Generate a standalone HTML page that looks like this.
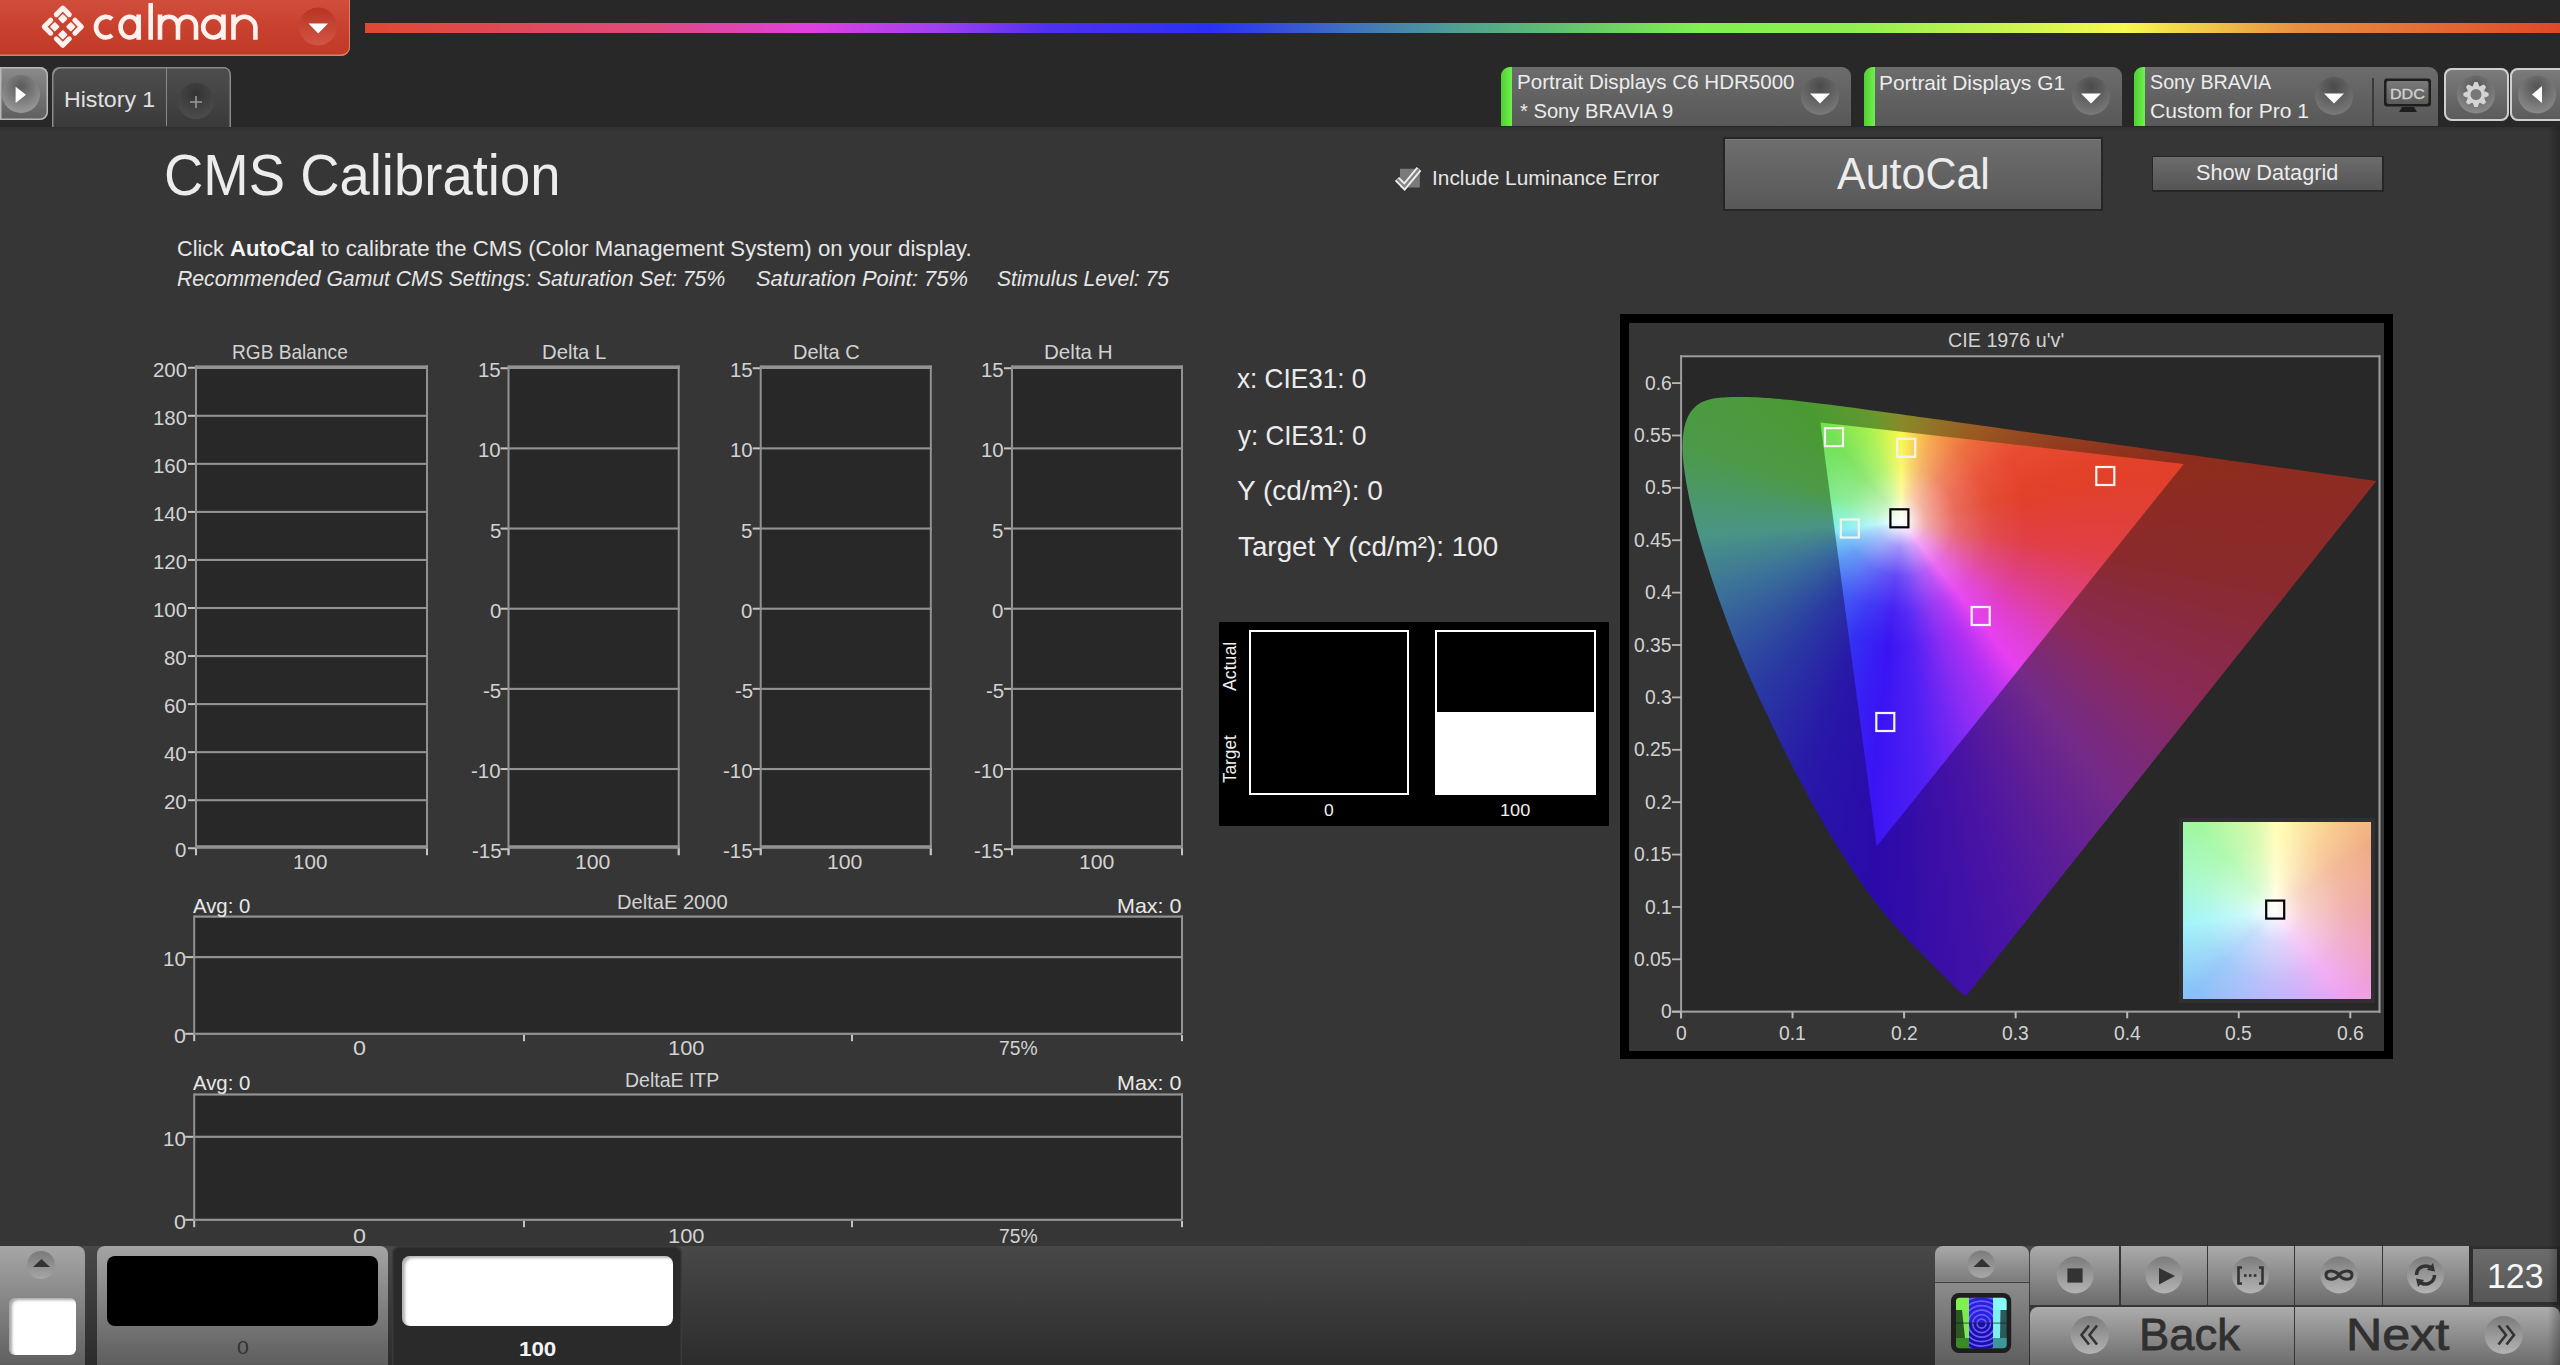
<!DOCTYPE html><html><head><meta charset="utf-8"><style>
html,body{margin:0;padding:0;}
body{width:2560px;height:1365px;overflow:hidden;position:relative;background:#363636;font-family:"Liberation Sans",sans-serif;}
.t{position:absolute;white-space:nowrap;transform-origin:0 0;}
svg{position:absolute;}
</style></head><body>

<div style="position:absolute;left:0px;top:0px;width:2560px;height:127px;background:#282828;"></div>
<div style="position:absolute;left:-10px;top:-10px;width:360px;height:66px;background:linear-gradient(#d45240,#c8402e 60%,#c03a28);border-radius:0 0 9px 9px;box-shadow:inset 0 -1.5px 0 #d8806e, inset -1px 0 0 #d8806e;"></div>
<svg style="left:0;top:0" width="350" height="56" viewBox="0 0 350 56">
<path d="M56.29,14.61L62.80,8.10L69.31,14.61M50.71,20.19L44.20,26.70L50.71,33.21M74.89,20.19L81.40,26.70L74.89,33.21M56.29,38.79L62.80,45.30L69.31,38.79" fill="none" stroke="#fff2ee" stroke-width="5.0" stroke-linecap="round" stroke-linejoin="round"/>
<path d="M62.80,15.20L66.30,18.70L62.80,22.20L59.30,18.70ZM54.80,23.20L58.30,26.70L54.80,30.20L51.30,26.70ZM70.80,23.20L74.30,26.70L70.80,30.20L67.30,26.70ZM62.80,31.20L66.30,34.70L62.80,38.20L59.30,34.70Z" fill="#fff2ee" stroke="#fff2ee" stroke-width="2" stroke-linejoin="round"/>
<path d="M112.16,18.99A10.0,10.35 0 1 0 112.16,35.31M138.70,27.15A9.05,10.35 0 1 0 120.60,27.15A9.05,10.35 0 1 0 138.70,27.15M138.70,14.5L138.70,39.8M150.7,3.1L150.7,39.8M160.00,14.5L160.00,39.8M160.00,25.80A9.00,9.00 0 0 1 178.00,25.80L178.00,39.8M178.00,25.80A9.00,9.00 0 0 1 196.00,25.80L196.00,39.8M223.50,27.15A10.15,10.35 0 1 0 203.20,27.15A10.15,10.35 0 1 0 223.50,27.15M223.50,14.5L223.50,39.8M233.50,14.5L233.50,39.8M233.50,27.75A10.95,10.95 0 0 1 255.40,27.75L255.40,39.8" fill="none" stroke="#fff2ee" stroke-width="4.6"/>
<defs><linearGradient id="rb" x1="0" y1="0" x2="0" y2="1"><stop offset="0" stop-color="#b83424"/><stop offset="1" stop-color="#d25544"/></linearGradient></defs>
<circle cx="318" cy="26.5" r="19" fill="url(#rb)"/>
<path d="M308.5,23.5L328,23.5L318.2,33.5Z" fill="#ffffff"/>
</svg>
<div style="position:absolute;left:365px;top:23px;width:2195px;height:10px;background:linear-gradient(90deg,#e04830 0%,#e04a80 13.4%,#e040e0 20.3%,#a040f0 26.2%,#5030f0 31.1%,#2a30f4 38.5%,#4070c0 44.8%,#50a090 49.9%,#60c070 54.4%,#80f050 60.8%,#90f050 67.7%,#f8f850 80.2%,#e89040 88%,#e04828 100%);"></div>
<div style="position:absolute;left:0px;top:67px;width:48px;height:53px;background:linear-gradient(#8c8c8c,#5e5e5e);border-radius:0 8px 8px 0;box-shadow:inset 0 0 0 1.5px #b8b8b8;"></div>
<svg style="left:0;top:67" width="48" height="53"><defs><radialGradient id="pc" cx="0.5" cy="0.3" r="0.7"><stop offset="0" stop-color="#5a5a5a"/><stop offset="1" stop-color="#9a9a9a"/></radialGradient></defs>
<circle cx="21" cy="27" r="19" fill="url(#pc)"/><path d="M15.6,19.7L26,27.8L15.6,36Z" fill="#fff"/></svg>
<div style="position:absolute;left:52px;top:67px;width:179px;height:60px;background:linear-gradient(#4e4e4e,#3a3a3a);border-radius:8px 8px 0 0;box-shadow:inset 1.5px 1.5px 0 #8a8a8a, inset -1.5px 0 0 #8a8a8a;"></div>
<div style="position:absolute;left:165.5px;top:68px;width:1.5px;height:58px;background:#8a8a8a;"></div>
<svg style="left:166;top:67" width="65" height="59"><defs><radialGradient id="hc" cx="0.5" cy="0.3" r="0.7"><stop offset="0" stop-color="#333"/><stop offset="1" stop-color="#4c4c4c"/></radialGradient></defs>
<circle cx="30" cy="34" r="18" fill="url(#hc)"/><path d="M30,29V41M24,35H36" stroke="#9a9a9a" stroke-width="1.6"/></svg>
<div class="t" style="left:63.75px;top:87.81px;font-size:22.67px;line-height:22.67px;color:#e0e0e0;transform:scaleX(1.0206);">History 1</div>
<div style="position:absolute;left:1501px;top:67px;width:350px;height:59px;background:linear-gradient(#6c6c6c,#585858);border-radius:9px 9px 0 0;overflow:hidden;"></div>
<div style="position:absolute;left:1501px;top:67px;width:11px;height:59px;background:linear-gradient(90deg,#50d030,#70f050);border-radius:9px 0 0 0;"></div>
<div style="position:absolute;left:1864px;top:67px;width:258px;height:59px;background:linear-gradient(#6c6c6c,#585858);border-radius:9px 9px 0 0;overflow:hidden;"></div>
<div style="position:absolute;left:1864px;top:67px;width:11px;height:59px;background:linear-gradient(90deg,#50d030,#70f050);border-radius:9px 0 0 0;"></div>
<div style="position:absolute;left:2134px;top:67px;width:304px;height:59px;background:linear-gradient(#6c6c6c,#585858);border-radius:9px 9px 0 0;overflow:hidden;"></div>
<div style="position:absolute;left:2134px;top:67px;width:11px;height:59px;background:linear-gradient(90deg,#50d030,#70f050);border-radius:9px 0 0 0;"></div>
<svg style="left:1800;top:76" width="40" height="40"><defs><radialGradient id="dc1820" cx="0.5" cy="0.25" r="0.75"><stop offset="0" stop-color="#4a4a4a"/><stop offset="1" stop-color="#7a7a7a"/></radialGradient></defs>
<circle cx="20" cy="20" r="19" fill="url(#dc1820)"/><path d="M10,17.5L30,17.5L20,27.5Z" fill="#fff"/></svg>
<svg style="left:2071;top:76" width="40" height="40"><defs><radialGradient id="dc2091" cx="0.5" cy="0.25" r="0.75"><stop offset="0" stop-color="#4a4a4a"/><stop offset="1" stop-color="#7a7a7a"/></radialGradient></defs>
<circle cx="20" cy="20" r="19" fill="url(#dc2091)"/><path d="M10,17.5L30,17.5L20,27.5Z" fill="#fff"/></svg>
<svg style="left:2314;top:76" width="40" height="40"><defs><radialGradient id="dc2334" cx="0.5" cy="0.25" r="0.75"><stop offset="0" stop-color="#4a4a4a"/><stop offset="1" stop-color="#7a7a7a"/></radialGradient></defs>
<circle cx="20" cy="20" r="19" fill="url(#dc2334)"/><path d="M10,17.5L30,17.5L20,27.5Z" fill="#fff"/></svg>
<div style="position:absolute;left:2372px;top:78px;width:1.5px;height:48px;background:#3a3a3a;"></div>
<div class="t" style="left:1517.36px;top:71.98px;font-size:20.93px;line-height:20.93px;color:#ececec;transform:scaleX(0.9823);">Portrait Displays C6 HDR5000</div>
<div class="t" style="left:1519.70px;top:100.78px;font-size:20.93px;line-height:20.93px;color:#ececec;transform:scaleX(0.9638);">* Sony BRAVIA 9</div>
<div class="t" style="left:1879.03px;top:72.58px;font-size:20.93px;line-height:20.93px;color:#ececec;">Portrait Displays G1</div>
<div class="t" style="left:2150.11px;top:72.28px;font-size:20.93px;line-height:20.93px;color:#ececec;transform:scaleX(0.9423);">Sony BRAVIA</div>
<div class="t" style="left:2149.95px;top:100.78px;font-size:20.93px;line-height:20.93px;color:#ececec;transform:scaleX(1.0055);">Custom for Pro 1</div>
<svg style="left:2380;top:76" width="56" height="40">
<rect x="4" y="2.5" width="47" height="28" rx="3" fill="#1e1e1e"/>
<rect x="6.5" y="5" width="42" height="23" rx="2" fill="url(#ddg)"/>
<defs><linearGradient id="ddg" x1="0" y1="0" x2="0" y2="1"><stop offset="0" stop-color="#7a7a7a"/><stop offset="1" stop-color="#5a5a5a"/></linearGradient></defs>
<path d="M22,31L34,31L37,36L19,36Z" fill="#1e1e1e"/>
</svg>
<div class="t" style="left:2389.71px;top:86.08px;font-size:15.26px;line-height:15.26px;color:#d0d0d0;transform:scaleX(1.0548);-webkit-text-stroke:0.4px #d0d0d0;">DDC</div>
<div style="position:absolute;left:2444px;top:68px;width:65px;height:53px;background:linear-gradient(#7c7c7c,#5a5a5a);border-radius:8px;box-shadow:inset 0 0 0 2px #cfcfcf;"></div>
<div style="position:absolute;left:2510px;top:68px;width:60px;height:53px;background:linear-gradient(#7c7c7c,#5a5a5a);border-radius:8px;box-shadow:inset 0 0 0 2px #cfcfcf;"></div>
<svg style="left:2444;top:68" width="65" height="53"><defs><radialGradient id="gc" cx="0.5" cy="0.3" r="0.7"><stop offset="0" stop-color="#545454"/><stop offset="1" stop-color="#8a8a8a"/></radialGradient></defs>
<circle cx="32" cy="26.5" r="19" fill="url(#gc)"/>
<g transform="translate(32,26.5)"><path d="M-3.2,-8.5L-1.6,-12.6L1.6,-12.6L3.2,-8.5Z" fill="#d4d4d4" transform="rotate(0)"/><path d="M-3.2,-8.5L-1.6,-12.6L1.6,-12.6L3.2,-8.5Z" fill="#d4d4d4" transform="rotate(45)"/><path d="M-3.2,-8.5L-1.6,-12.6L1.6,-12.6L3.2,-8.5Z" fill="#d4d4d4" transform="rotate(90)"/><path d="M-3.2,-8.5L-1.6,-12.6L1.6,-12.6L3.2,-8.5Z" fill="#d4d4d4" transform="rotate(135)"/><path d="M-3.2,-8.5L-1.6,-12.6L1.6,-12.6L3.2,-8.5Z" fill="#d4d4d4" transform="rotate(180)"/><path d="M-3.2,-8.5L-1.6,-12.6L1.6,-12.6L3.2,-8.5Z" fill="#d4d4d4" transform="rotate(225)"/><path d="M-3.2,-8.5L-1.6,-12.6L1.6,-12.6L3.2,-8.5Z" fill="#d4d4d4" transform="rotate(270)"/><path d="M-3.2,-8.5L-1.6,-12.6L1.6,-12.6L3.2,-8.5Z" fill="#d4d4d4" transform="rotate(315)"/><circle r="7.3" fill="#787878" stroke="#d4d4d4" stroke-width="3.6"/></g></svg>
<svg style="left:2510;top:68" width="50" height="53"><defs><radialGradient id="bc" cx="0.5" cy="0.3" r="0.7"><stop offset="0" stop-color="#545454"/><stop offset="1" stop-color="#8a8a8a"/></radialGradient></defs>
<circle cx="27" cy="26.5" r="19" fill="url(#bc)"/><path d="M32,18L22,26.5L32,35Z" fill="#fff"/></svg>
<div class="t" style="left:163.98px;top:146.18px;font-size:58.14px;line-height:58.14px;color:#ececec;transform:scaleX(0.9369);">CMS Calibration</div>
<div class="t" style="left:176.92px;top:237.93px;font-size:22.53px;line-height:22.53px;color:#e6e6e6;transform:scaleX(0.9612);">Click</div>
<div class="t" style="left:230.35px;top:237.93px;font-size:22.53px;line-height:22.53px;color:#f4f4f4;font-weight:bold;transform:scaleX(0.9803);">AutoCal</div>
<div class="t" style="left:321.07px;top:237.93px;font-size:22.53px;line-height:22.53px;color:#e6e6e6;transform:scaleX(0.9853);">to calibrate the CMS (Color Management System) on your display.</div>
<div class="t" style="left:177.36px;top:267.73px;font-size:22.53px;line-height:22.53px;color:#e6e6e6;font-style:italic;transform:scaleX(0.9400);">Recommended Gamut CMS Settings: Saturation Set: 75%</div>
<div class="t" style="left:755.84px;top:267.73px;font-size:22.53px;line-height:22.53px;color:#e6e6e6;font-style:italic;transform:scaleX(0.9733);">Saturation Point: 75%</div>
<div class="t" style="left:997.37px;top:267.73px;font-size:22.53px;line-height:22.53px;color:#e6e6e6;font-style:italic;transform:scaleX(0.9346);">Stimulus Level: 75</div>
<svg style="left:1390;top:160" width="40" height="36">
<rect x="10" y="8.75" width="19.8" height="18.75" fill="#7a7a7a"/>
<path d="M7,19L14.5,26.5L29,9" fill="none" stroke="#f0f0f0" stroke-width="6" stroke-linejoin="miter"/>
<path d="M7,19L14.5,26.5L29,9" fill="none" stroke="#858585" stroke-width="2.4" stroke-linejoin="miter"/>
</svg>
<div class="t" style="left:1432.12px;top:168.47px;font-size:20.35px;line-height:20.35px;color:#e6e6e6;transform:scaleX(1.0252);">Include Luminance Error</div>
<div style="position:absolute;left:1723px;top:137px;width:380px;height:74px;background:#262626;"></div>
<div style="position:absolute;left:1725px;top:139px;width:376px;height:70px;background:linear-gradient(#6e6e6e,#585858);box-shadow:inset 0 1px 0 #7a7a7a;"></div>
<div class="t" style="left:1837.00px;top:153.09px;font-size:43.60px;line-height:43.60px;color:#ececec;transform:scaleX(0.9857);">AutoCal</div>
<div style="position:absolute;left:2151.5px;top:155.5px;width:232px;height:36px;background:#262626;"></div>
<div style="position:absolute;left:2152.7px;top:156.7px;width:229.5px;height:33.5px;background:linear-gradient(#6c6c6c,#555);"></div>
<div class="t" style="left:2195.92px;top:161.93px;font-size:22.53px;line-height:22.53px;color:#ececec;transform:scaleX(0.9641);">Show Datagrid</div>
<svg style="left:0;top:0" width="1240" height="1246"><rect x="196.00" y="367.20" width="231.00" height="479.80" fill="#282828"/><rect x="196.00" y="365.40" width="232.00" height="3.60" fill="#929292"/><rect x="188.00" y="366.75" width="8.00" height="2.00" fill="#c4c4c4"/><rect x="196.00" y="414.75" width="232.00" height="2.10" fill="#929292"/><rect x="188.00" y="414.80" width="8.00" height="2.00" fill="#c4c4c4"/><rect x="196.00" y="462.80" width="232.00" height="2.10" fill="#929292"/><rect x="188.00" y="462.85" width="8.00" height="2.00" fill="#c4c4c4"/><rect x="196.00" y="510.85" width="232.00" height="2.10" fill="#929292"/><rect x="188.00" y="510.90" width="8.00" height="2.00" fill="#c4c4c4"/><rect x="196.00" y="558.90" width="232.00" height="2.10" fill="#929292"/><rect x="188.00" y="558.95" width="8.00" height="2.00" fill="#c4c4c4"/><rect x="196.00" y="606.95" width="232.00" height="2.10" fill="#929292"/><rect x="188.00" y="607.00" width="8.00" height="2.00" fill="#c4c4c4"/><rect x="196.00" y="655.00" width="232.00" height="2.10" fill="#929292"/><rect x="188.00" y="655.05" width="8.00" height="2.00" fill="#c4c4c4"/><rect x="196.00" y="703.05" width="232.00" height="2.10" fill="#929292"/><rect x="188.00" y="703.10" width="8.00" height="2.00" fill="#c4c4c4"/><rect x="196.00" y="751.10" width="232.00" height="2.10" fill="#929292"/><rect x="188.00" y="751.15" width="8.00" height="2.00" fill="#c4c4c4"/><rect x="196.00" y="799.15" width="232.00" height="2.10" fill="#929292"/><rect x="188.00" y="799.20" width="8.00" height="2.00" fill="#c4c4c4"/><rect x="196.00" y="845.20" width="232.00" height="3.60" fill="#929292"/><rect x="188.00" y="847.25" width="8.00" height="2.00" fill="#c4c4c4"/><rect x="195.00" y="365.40" width="2.00" height="490.00" fill="#929292"/><rect x="426.00" y="365.40" width="2.00" height="490.00" fill="#929292"/><rect x="195.00" y="848.50" width="2.00" height="6.50" fill="#c4c4c4"/><rect x="426.00" y="848.50" width="2.00" height="6.50" fill="#c4c4c4"/><rect x="508.50" y="367.20" width="170.20" height="479.80" fill="#282828"/><rect x="508.50" y="365.40" width="171.20" height="3.60" fill="#929292"/><rect x="500.50" y="367.22" width="8.00" height="2.00" fill="#c4c4c4"/><rect x="508.50" y="447.33" width="171.20" height="2.10" fill="#929292"/><rect x="500.50" y="447.38" width="8.00" height="2.00" fill="#c4c4c4"/><rect x="508.50" y="527.49" width="171.20" height="2.10" fill="#929292"/><rect x="500.50" y="527.54" width="8.00" height="2.00" fill="#c4c4c4"/><rect x="508.50" y="607.65" width="171.20" height="2.10" fill="#929292"/><rect x="500.50" y="607.70" width="8.00" height="2.00" fill="#c4c4c4"/><rect x="508.50" y="687.81" width="171.20" height="2.10" fill="#929292"/><rect x="500.50" y="687.86" width="8.00" height="2.00" fill="#c4c4c4"/><rect x="508.50" y="767.97" width="171.20" height="2.10" fill="#929292"/><rect x="500.50" y="768.02" width="8.00" height="2.00" fill="#c4c4c4"/><rect x="508.50" y="845.20" width="171.20" height="3.60" fill="#929292"/><rect x="500.50" y="848.18" width="8.00" height="2.00" fill="#c4c4c4"/><rect x="507.50" y="365.40" width="2.00" height="490.00" fill="#929292"/><rect x="677.70" y="365.40" width="2.00" height="490.00" fill="#929292"/><rect x="507.50" y="848.50" width="2.00" height="6.50" fill="#c4c4c4"/><rect x="677.70" y="848.50" width="2.00" height="6.50" fill="#c4c4c4"/><rect x="760.70" y="367.20" width="170.10" height="479.80" fill="#282828"/><rect x="760.70" y="365.40" width="171.10" height="3.60" fill="#929292"/><rect x="752.70" y="367.22" width="8.00" height="2.00" fill="#c4c4c4"/><rect x="760.70" y="447.33" width="171.10" height="2.10" fill="#929292"/><rect x="752.70" y="447.38" width="8.00" height="2.00" fill="#c4c4c4"/><rect x="760.70" y="527.49" width="171.10" height="2.10" fill="#929292"/><rect x="752.70" y="527.54" width="8.00" height="2.00" fill="#c4c4c4"/><rect x="760.70" y="607.65" width="171.10" height="2.10" fill="#929292"/><rect x="752.70" y="607.70" width="8.00" height="2.00" fill="#c4c4c4"/><rect x="760.70" y="687.81" width="171.10" height="2.10" fill="#929292"/><rect x="752.70" y="687.86" width="8.00" height="2.00" fill="#c4c4c4"/><rect x="760.70" y="767.97" width="171.10" height="2.10" fill="#929292"/><rect x="752.70" y="768.02" width="8.00" height="2.00" fill="#c4c4c4"/><rect x="760.70" y="845.20" width="171.10" height="3.60" fill="#929292"/><rect x="752.70" y="848.18" width="8.00" height="2.00" fill="#c4c4c4"/><rect x="759.70" y="365.40" width="2.00" height="490.00" fill="#929292"/><rect x="929.80" y="365.40" width="2.00" height="490.00" fill="#929292"/><rect x="759.70" y="848.50" width="2.00" height="6.50" fill="#c4c4c4"/><rect x="929.80" y="848.50" width="2.00" height="6.50" fill="#c4c4c4"/><rect x="1012.00" y="367.20" width="170.00" height="479.80" fill="#282828"/><rect x="1012.00" y="365.40" width="171.00" height="3.60" fill="#929292"/><rect x="1004.00" y="367.22" width="8.00" height="2.00" fill="#c4c4c4"/><rect x="1012.00" y="447.33" width="171.00" height="2.10" fill="#929292"/><rect x="1004.00" y="447.38" width="8.00" height="2.00" fill="#c4c4c4"/><rect x="1012.00" y="527.49" width="171.00" height="2.10" fill="#929292"/><rect x="1004.00" y="527.54" width="8.00" height="2.00" fill="#c4c4c4"/><rect x="1012.00" y="607.65" width="171.00" height="2.10" fill="#929292"/><rect x="1004.00" y="607.70" width="8.00" height="2.00" fill="#c4c4c4"/><rect x="1012.00" y="687.81" width="171.00" height="2.10" fill="#929292"/><rect x="1004.00" y="687.86" width="8.00" height="2.00" fill="#c4c4c4"/><rect x="1012.00" y="767.97" width="171.00" height="2.10" fill="#929292"/><rect x="1004.00" y="768.02" width="8.00" height="2.00" fill="#c4c4c4"/><rect x="1012.00" y="845.20" width="171.00" height="3.60" fill="#929292"/><rect x="1004.00" y="848.18" width="8.00" height="2.00" fill="#c4c4c4"/><rect x="1011.00" y="365.40" width="2.00" height="490.00" fill="#929292"/><rect x="1181.00" y="365.40" width="2.00" height="490.00" fill="#929292"/><rect x="1011.00" y="848.50" width="2.00" height="6.50" fill="#c4c4c4"/><rect x="1181.00" y="848.50" width="2.00" height="6.50" fill="#c4c4c4"/><rect x="194.20" y="916.60" width="987.80" height="117.20" fill="#282828"/><rect x="194.20" y="956.00" width="987.80" height="2.20" fill="#929292"/><rect x="194.20" y="1032.70" width="987.80" height="2.20" fill="#929292"/><rect x="185.20" y="956.10" width="9.00" height="2.00" fill="#c4c4c4"/><rect x="185.20" y="1032.80" width="9.00" height="2.00" fill="#c4c4c4"/><rect x="194.20" y="915.50" width="988.80" height="2.20" fill="#929292"/><rect x="193.20" y="915.50" width="2.00" height="118.30" fill="#929292"/><rect x="1181.00" y="915.50" width="2.00" height="118.30" fill="#929292"/><rect x="193.20" y="1034.90" width="2.00" height="6.30" fill="#c4c4c4"/><rect x="523.00" y="1034.90" width="2.00" height="6.30" fill="#c4c4c4"/><rect x="851.00" y="1034.90" width="2.00" height="6.30" fill="#c4c4c4"/><rect x="1181.00" y="1034.90" width="2.00" height="6.30" fill="#c4c4c4"/><rect x="194.20" y="1094.50" width="987.80" height="125.30" fill="#282828"/><rect x="194.20" y="1135.70" width="987.80" height="2.20" fill="#929292"/><rect x="194.20" y="1218.70" width="987.80" height="2.20" fill="#929292"/><rect x="185.20" y="1135.80" width="9.00" height="2.00" fill="#c4c4c4"/><rect x="185.20" y="1218.80" width="9.00" height="2.00" fill="#c4c4c4"/><rect x="194.20" y="1093.40" width="988.80" height="2.20" fill="#929292"/><rect x="193.20" y="1093.40" width="2.00" height="126.40" fill="#929292"/><rect x="1181.00" y="1093.40" width="2.00" height="126.40" fill="#929292"/><rect x="193.20" y="1220.90" width="2.00" height="6.30" fill="#c4c4c4"/><rect x="523.00" y="1220.90" width="2.00" height="6.30" fill="#c4c4c4"/><rect x="851.00" y="1220.90" width="2.00" height="6.30" fill="#c4c4c4"/><rect x="1181.00" y="1220.90" width="2.00" height="6.30" fill="#c4c4c4"/></svg>
<div class="t" style="left:232.47px;top:341.81px;font-size:20.78px;line-height:20.78px;color:#d2d2d2;transform:scaleX(0.9201);">RGB Balance</div>
<div class="t" style="left:293.46px;top:851.16px;font-size:21.08px;line-height:21.08px;color:#d2d2d2;transform:scaleX(0.9764);">100</div>
<div class="t" style="left:152.68px;top:358.71px;font-size:21.08px;line-height:21.08px;color:#d2d2d2;transform:scaleX(0.9700);">200</div>
<div class="t" style="left:152.68px;top:406.76px;font-size:21.08px;line-height:21.08px;color:#d2d2d2;transform:scaleX(0.9700);">180</div>
<div class="t" style="left:152.68px;top:454.81px;font-size:21.08px;line-height:21.08px;color:#d2d2d2;transform:scaleX(0.9700);">160</div>
<div class="t" style="left:152.68px;top:502.86px;font-size:21.08px;line-height:21.08px;color:#d2d2d2;transform:scaleX(0.9700);">140</div>
<div class="t" style="left:152.68px;top:550.91px;font-size:21.08px;line-height:21.08px;color:#d2d2d2;transform:scaleX(0.9700);">120</div>
<div class="t" style="left:152.68px;top:598.96px;font-size:21.08px;line-height:21.08px;color:#d2d2d2;transform:scaleX(0.9700);">100</div>
<div class="t" style="left:164.02px;top:647.01px;font-size:21.08px;line-height:21.08px;color:#d2d2d2;transform:scaleX(0.9700);">80</div>
<div class="t" style="left:164.02px;top:695.06px;font-size:21.08px;line-height:21.08px;color:#d2d2d2;transform:scaleX(0.9700);">60</div>
<div class="t" style="left:164.02px;top:743.11px;font-size:21.08px;line-height:21.08px;color:#d2d2d2;transform:scaleX(0.9700);">40</div>
<div class="t" style="left:164.02px;top:791.16px;font-size:21.08px;line-height:21.08px;color:#d2d2d2;transform:scaleX(0.9700);">20</div>
<div class="t" style="left:175.37px;top:839.21px;font-size:21.08px;line-height:21.08px;color:#d2d2d2;transform:scaleX(0.9700);">0</div>
<div class="t" style="left:542.38px;top:341.81px;font-size:20.78px;line-height:20.78px;color:#d2d2d2;transform:scaleX(0.9764);">Delta L</div>
<div class="t" style="left:575.41px;top:851.16px;font-size:21.08px;line-height:21.08px;color:#d2d2d2;transform:scaleX(1.0069);">100</div>
<div class="t" style="left:478.43px;top:359.18px;font-size:21.08px;line-height:21.08px;color:#d2d2d2;transform:scaleX(0.9700);">15</div>
<div class="t" style="left:478.32px;top:439.34px;font-size:21.08px;line-height:21.08px;color:#d2d2d2;transform:scaleX(0.9700);">10</div>
<div class="t" style="left:489.77px;top:519.50px;font-size:21.08px;line-height:21.08px;color:#d2d2d2;transform:scaleX(0.9700);">5</div>
<div class="t" style="left:489.67px;top:599.66px;font-size:21.08px;line-height:21.08px;color:#d2d2d2;transform:scaleX(0.9700);">0</div>
<div class="t" style="left:482.92px;top:679.82px;font-size:21.08px;line-height:21.08px;color:#d2d2d2;transform:scaleX(0.9700);">-5</div>
<div class="t" style="left:471.47px;top:759.98px;font-size:21.08px;line-height:21.08px;color:#d2d2d2;transform:scaleX(0.9700);">-10</div>
<div class="t" style="left:471.58px;top:840.14px;font-size:21.08px;line-height:21.08px;color:#d2d2d2;transform:scaleX(0.9700);">-15</div>
<div class="t" style="left:793.00px;top:341.81px;font-size:20.78px;line-height:20.78px;color:#d2d2d2;transform:scaleX(0.9637);">Delta C</div>
<div class="t" style="left:827.41px;top:851.16px;font-size:21.08px;line-height:21.08px;color:#d2d2d2;transform:scaleX(1.0069);">100</div>
<div class="t" style="left:730.13px;top:359.18px;font-size:21.08px;line-height:21.08px;color:#d2d2d2;transform:scaleX(0.9700);">15</div>
<div class="t" style="left:730.02px;top:439.34px;font-size:21.08px;line-height:21.08px;color:#d2d2d2;transform:scaleX(0.9700);">10</div>
<div class="t" style="left:741.47px;top:519.50px;font-size:21.08px;line-height:21.08px;color:#d2d2d2;transform:scaleX(0.9700);">5</div>
<div class="t" style="left:741.37px;top:599.66px;font-size:21.08px;line-height:21.08px;color:#d2d2d2;transform:scaleX(0.9700);">0</div>
<div class="t" style="left:734.62px;top:679.82px;font-size:21.08px;line-height:21.08px;color:#d2d2d2;transform:scaleX(0.9700);">-5</div>
<div class="t" style="left:723.17px;top:759.98px;font-size:21.08px;line-height:21.08px;color:#d2d2d2;transform:scaleX(0.9700);">-10</div>
<div class="t" style="left:723.28px;top:840.14px;font-size:21.08px;line-height:21.08px;color:#d2d2d2;transform:scaleX(0.9700);">-15</div>
<div class="t" style="left:1043.85px;top:341.81px;font-size:20.78px;line-height:20.78px;color:#d2d2d2;transform:scaleX(0.9911);">Delta H</div>
<div class="t" style="left:1079.01px;top:851.16px;font-size:21.08px;line-height:21.08px;color:#d2d2d2;transform:scaleX(1.0069);">100</div>
<div class="t" style="left:981.13px;top:359.18px;font-size:21.08px;line-height:21.08px;color:#d2d2d2;transform:scaleX(0.9700);">15</div>
<div class="t" style="left:981.02px;top:439.34px;font-size:21.08px;line-height:21.08px;color:#d2d2d2;transform:scaleX(0.9700);">10</div>
<div class="t" style="left:992.47px;top:519.50px;font-size:21.08px;line-height:21.08px;color:#d2d2d2;transform:scaleX(0.9700);">5</div>
<div class="t" style="left:992.37px;top:599.66px;font-size:21.08px;line-height:21.08px;color:#d2d2d2;transform:scaleX(0.9700);">0</div>
<div class="t" style="left:985.62px;top:679.82px;font-size:21.08px;line-height:21.08px;color:#d2d2d2;transform:scaleX(0.9700);">-5</div>
<div class="t" style="left:974.17px;top:759.98px;font-size:21.08px;line-height:21.08px;color:#d2d2d2;transform:scaleX(0.9700);">-10</div>
<div class="t" style="left:974.28px;top:840.14px;font-size:21.08px;line-height:21.08px;color:#d2d2d2;transform:scaleX(0.9700);">-15</div>
<div class="t" style="left:193.00px;top:895.71px;font-size:20.78px;line-height:20.78px;color:#e8e8e8;transform:scaleX(0.9795);">Avg: 0</div>
<div class="t" style="left:1117.28px;top:895.71px;font-size:20.78px;line-height:20.78px;color:#e8e8e8;transform:scaleX(1.0339);">Max: 0</div>
<div class="t" style="left:617.39px;top:892.21px;font-size:20.78px;line-height:20.78px;color:#d2d2d2;transform:scaleX(0.9676);">DeltaE 2000</div>
<div class="t" style="left:162.76px;top:948.26px;font-size:21.08px;line-height:21.08px;color:#d2d2d2;transform:scaleX(0.9774);">10</div>
<div class="t" style="left:173.54px;top:1024.96px;font-size:21.08px;line-height:21.08px;color:#d2d2d2;transform:scaleX(1.0182);">0</div>
<div class="t" style="left:352.67px;top:1038.43px;font-size:20.64px;line-height:20.64px;color:#d2d2d2;transform:scaleX(1.1305);">0</div>
<div class="t" style="left:668.36px;top:1038.43px;font-size:20.64px;line-height:20.64px;color:#d2d2d2;transform:scaleX(1.0594);">100</div>
<div class="t" style="left:999.03px;top:1038.43px;font-size:20.64px;line-height:20.64px;color:#d2d2d2;transform:scaleX(0.9361);">75%</div>
<div class="t" style="left:193.00px;top:1073.41px;font-size:20.78px;line-height:20.78px;color:#e8e8e8;transform:scaleX(0.9795);">Avg: 0</div>
<div class="t" style="left:1117.28px;top:1073.41px;font-size:20.78px;line-height:20.78px;color:#e8e8e8;transform:scaleX(1.0339);">Max: 0</div>
<div class="t" style="left:625.44px;top:1069.91px;font-size:20.78px;line-height:20.78px;color:#d2d2d2;transform:scaleX(0.9387);">DeltaE ITP</div>
<div class="t" style="left:162.76px;top:1127.96px;font-size:21.08px;line-height:21.08px;color:#d2d2d2;transform:scaleX(0.9774);">10</div>
<div class="t" style="left:173.54px;top:1210.96px;font-size:21.08px;line-height:21.08px;color:#d2d2d2;transform:scaleX(1.0182);">0</div>
<div class="t" style="left:352.67px;top:1226.03px;font-size:20.64px;line-height:20.64px;color:#d2d2d2;transform:scaleX(1.1305);">0</div>
<div class="t" style="left:668.36px;top:1226.03px;font-size:20.64px;line-height:20.64px;color:#d2d2d2;transform:scaleX(1.0594);">100</div>
<div class="t" style="left:999.03px;top:1226.03px;font-size:20.64px;line-height:20.64px;color:#d2d2d2;transform:scaleX(0.9361);">75%</div>
<div class="t" style="left:1236.84px;top:366.31px;font-size:27.03px;line-height:27.03px;color:#ececec;transform:scaleX(0.9678);">x: CIE31: 0</div>
<div class="t" style="left:1237.77px;top:422.71px;font-size:27.03px;line-height:27.03px;color:#ececec;transform:scaleX(0.9607);">y: CIE31: 0</div>
<div class="t" style="left:1237.20px;top:478.01px;font-size:27.03px;line-height:27.03px;color:#ececec;transform:scaleX(1.0374);">Y (cd/m²): 0</div>
<div class="t" style="left:1238.14px;top:533.61px;font-size:27.03px;line-height:27.03px;color:#ececec;transform:scaleX(1.0293);">Target Y (cd/m²): 100</div>
<div style="position:absolute;left:1219.3px;top:621.8px;width:390.2px;height:204px;background:#000;"></div>
<div style="position:absolute;left:1249.1px;top:630.2px;width:160.1px;height:164.7px;background:#000;box-shadow:inset 0 0 0 2px #fff;"></div>
<div style="position:absolute;left:1435px;top:630.2px;width:160.5px;height:164.7px;background:#fff;"></div>
<div style="position:absolute;left:1437px;top:632.2px;width:156.5px;height:80.3px;background:#000;"></div>
<div style="position:absolute;left:1236.60px;top:690.90px;width:0;height:0;transform:rotate(-90deg);transform-origin:0 0;"><div class="t" style="left:-0.00px;top:-14.76px;font-size:17.44px;line-height:17.44px;color:#f0f0f0;transform:scaleX(1.0155);">Actual</div></div>
<div style="position:absolute;left:1236.60px;top:782.80px;width:0;height:0;transform:rotate(-90deg);transform-origin:0 0;"><div class="t" style="left:-0.34px;top:-14.76px;font-size:17.44px;line-height:17.44px;color:#f0f0f0;transform:scaleX(0.9840);">Target</div></div>
<div class="t" style="left:1323.90px;top:801.52px;font-size:16.28px;line-height:16.28px;color:#f0f0f0;transform:scaleX(1.0750);">0</div>
<div class="t" style="left:1499.94px;top:801.52px;font-size:16.28px;line-height:16.28px;color:#f0f0f0;transform:scaleX(1.1140);">100</div>
<div style="position:absolute;left:1619.8px;top:314px;width:773.5px;height:745.2px;background:#000;"></div>
<div style="position:absolute;left:1628.6px;top:323px;width:755.5px;height:727.5px;background:#353535;"></div>
<div style="position:absolute;left:1681px;top:356.3px;width:698.5px;height:655.4px;background:#282828;"></div>
<svg style="left:0;top:0" width="2560" height="1100"><rect x="1680.1" y="355.3" width="700.3" height="2" fill="#9d9d9d"/><rect x="1680.1" y="355.3" width="2" height="663" fill="#9d9d9d"/><rect x="2378.5" y="355.3" width="2" height="657.6" fill="#9d9d9d"/><rect x="1672" y="1010.6" width="708.4" height="2.1" fill="#9d9d9d"/><rect x="1672" y="382.18" width="9" height="1.8" fill="#b8b8b8"/><rect x="1672" y="434.57" width="9" height="1.8" fill="#b8b8b8"/><rect x="1672" y="486.95" width="9" height="1.8" fill="#b8b8b8"/><rect x="1672" y="539.34" width="9" height="1.8" fill="#b8b8b8"/><rect x="1672" y="591.72" width="9" height="1.8" fill="#b8b8b8"/><rect x="1672" y="644.11" width="9" height="1.8" fill="#b8b8b8"/><rect x="1672" y="696.49" width="9" height="1.8" fill="#b8b8b8"/><rect x="1672" y="748.88" width="9" height="1.8" fill="#b8b8b8"/><rect x="1672" y="801.26" width="9" height="1.8" fill="#b8b8b8"/><rect x="1672" y="853.65" width="9" height="1.8" fill="#b8b8b8"/><rect x="1672" y="906.03" width="9" height="1.8" fill="#b8b8b8"/><rect x="1672" y="958.42" width="9" height="1.8" fill="#b8b8b8"/><rect x="1672" y="1010.80" width="9" height="1.8" fill="#b8b8b8"/><rect x="1680.00" y="1012" width="2" height="6.3" fill="#b8b8b8"/><rect x="1791.55" y="1012" width="2" height="6.3" fill="#b8b8b8"/><rect x="1903.10" y="1012" width="2" height="6.3" fill="#b8b8b8"/><rect x="2014.65" y="1012" width="2" height="6.3" fill="#b8b8b8"/><rect x="2126.20" y="1012" width="2" height="6.3" fill="#b8b8b8"/><rect x="2237.75" y="1012" width="2" height="6.3" fill="#b8b8b8"/><rect x="2349.30" y="1012" width="2" height="6.3" fill="#b8b8b8"/></svg>
<div class="t" style="left:1645.20px;top:372.69px;font-size:20.78px;line-height:20.78px;color:#d2d2d2;transform:scaleX(0.9300);">0.6</div>
<div class="t" style="left:1634.48px;top:425.07px;font-size:20.78px;line-height:20.78px;color:#d2d2d2;transform:scaleX(0.9300);">0.55</div>
<div class="t" style="left:1645.20px;top:477.46px;font-size:20.78px;line-height:20.78px;color:#d2d2d2;transform:scaleX(0.9300);">0.5</div>
<div class="t" style="left:1634.48px;top:529.84px;font-size:20.78px;line-height:20.78px;color:#d2d2d2;transform:scaleX(0.9300);">0.45</div>
<div class="t" style="left:1645.01px;top:582.23px;font-size:20.78px;line-height:20.78px;color:#d2d2d2;transform:scaleX(0.9300);">0.4</div>
<div class="t" style="left:1634.48px;top:634.61px;font-size:20.78px;line-height:20.78px;color:#d2d2d2;transform:scaleX(0.9300);">0.35</div>
<div class="t" style="left:1645.20px;top:687.00px;font-size:20.78px;line-height:20.78px;color:#d2d2d2;transform:scaleX(0.9300);">0.3</div>
<div class="t" style="left:1634.48px;top:739.38px;font-size:20.78px;line-height:20.78px;color:#d2d2d2;transform:scaleX(0.9300);">0.25</div>
<div class="t" style="left:1645.40px;top:791.77px;font-size:20.78px;line-height:20.78px;color:#d2d2d2;transform:scaleX(0.9300);">0.2</div>
<div class="t" style="left:1634.48px;top:844.15px;font-size:20.78px;line-height:20.78px;color:#d2d2d2;transform:scaleX(0.9300);">0.15</div>
<div class="t" style="left:1645.30px;top:896.54px;font-size:20.78px;line-height:20.78px;color:#d2d2d2;transform:scaleX(0.9300);">0.1</div>
<div class="t" style="left:1634.48px;top:948.92px;font-size:20.78px;line-height:20.78px;color:#d2d2d2;transform:scaleX(0.9300);">0.05</div>
<div class="t" style="left:1661.25px;top:1001.31px;font-size:20.78px;line-height:20.78px;color:#d2d2d2;transform:scaleX(0.9300);">0</div>
<div class="t" style="left:1675.59px;top:1023.01px;font-size:20.78px;line-height:20.78px;color:#d2d2d2;transform:scaleX(0.9300);">0</div>
<div class="t" style="left:1779.16px;top:1023.01px;font-size:20.78px;line-height:20.78px;color:#d2d2d2;transform:scaleX(0.9300);">0.1</div>
<div class="t" style="left:1890.76px;top:1023.01px;font-size:20.78px;line-height:20.78px;color:#d2d2d2;transform:scaleX(0.9300);">0.2</div>
<div class="t" style="left:2002.22px;top:1023.01px;font-size:20.78px;line-height:20.78px;color:#d2d2d2;transform:scaleX(0.9300);">0.3</div>
<div class="t" style="left:2113.67px;top:1023.01px;font-size:20.78px;line-height:20.78px;color:#d2d2d2;transform:scaleX(0.9300);">0.4</div>
<div class="t" style="left:2225.32px;top:1023.01px;font-size:20.78px;line-height:20.78px;color:#d2d2d2;transform:scaleX(0.9300);">0.5</div>
<div class="t" style="left:2336.87px;top:1023.01px;font-size:20.78px;line-height:20.78px;color:#d2d2d2;transform:scaleX(0.9300);">0.6</div>
<div class="t" style="left:1947.81px;top:331.24px;font-size:19.91px;line-height:19.91px;color:#d2d2d2;transform:scaleX(0.9914);">CIE 1976 u'v'</div>
<div style="position:absolute;left:1681px;top:380px;width:700px;height:625px;background:conic-gradient(from 0deg at 220.6px 141.1px,#8a8a2a 0deg,#9a5a22 40deg,#8e2c1c 78deg,#8a2a2e 100deg,#8a2a58 122deg,#742a88 142deg,#4a14a4 165deg,#2a0aaa 184deg,#2818a8 200deg,#2a3ca2 222deg,#3a709a 248deg,#4a9486 266deg,#4c9a48 290deg,#4a9a32 320deg,#66982e 345deg,#8a8a2a 360deg);clip-path:polygon(286.5px 614.4px,286.5px 614.4px,286.4px 614.4px,286.4px 614.4px,286.4px 614.4px,286.3px 614.4px,286.3px 614.4px,286.2px 614.5px,286.2px 614.6px,286.1px 614.6px,286.0px 614.6px,285.9px 614.6px,285.8px 614.5px,285.7px 614.5px,285.6px 614.5px,285.6px 614.6px,285.5px 614.7px,285.5px 614.8px,285.4px 614.9px,285.4px 615.0px,285.3px 615.0px,285.2px 615.1px,285.1px 615.1px,285.0px 615.1px,284.9px 615.1px,284.7px 615.1px,284.6px 615.1px,284.4px 615.0px,284.2px 615.0px,284.0px 615.0px,283.9px 615.0px,283.7px 615.0px,283.6px 615.0px,283.4px 615.0px,283.2px 615.0px,282.9px 614.9px,282.7px 614.8px,282.5px 614.7px,282.2px 614.6px,281.8px 614.3px,281.3px 614.0px,280.8px 613.6px,280.3px 613.2px,279.7px 612.8px,279.1px 612.3px,278.5px 611.7px,277.8px 611.1px,277.0px 610.4px,276.3px 609.7px,275.4px 608.9px,274.5px 608.0px,273.5px 607.1px,272.5px 606.0px,271.4px 605.0px,270.2px 603.8px,268.9px 602.6px,267.7px 601.2px,266.3px 599.8px,264.9px 598.3px,263.4px 596.8px,261.9px 595.2px,260.2px 593.5px,258.5px 591.7px,256.7px 589.9px,254.8px 588.0px,252.8px 586.0px,250.7px 583.8px,248.5px 581.5px,246.1px 579.2px,243.6px 576.7px,241.1px 574.1px,238.4px 571.4px,235.7px 568.7px,232.8px 565.8px,229.9px 562.7px,226.8px 559.5px,223.5px 556.1px,220.2px 552.5px,216.7px 548.7px,213.1px 544.7px,209.3px 540.4px,205.5px 536.0px,201.6px 531.2px,197.4px 526.1px,193.1px 520.6px,188.5px 514.5px,183.6px 507.7px,178.3px 500.1px,172.7px 491.9px,166.8px 483.0px,160.7px 473.5px,154.5px 463.5px,148.1px 452.9px,141.5px 441.7px,134.8px 429.9px,127.9px 417.5px,120.9px 404.5px,113.8px 391.0px,106.7px 377.0px,99.5px 362.6px,92.4px 348.0px,85.3px 333.1px,78.2px 318.1px,71.3px 303.0px,64.6px 287.8px,58.2px 272.6px,52.1px 257.6px,46.4px 242.8px,41.1px 228.3px,36.1px 214.2px,31.4px 200.4px,27.1px 187.1px,23.1px 174.3px,19.4px 162.0px,16.1px 150.4px,13.2px 139.4px,10.7px 129.2px,8.5px 119.5px,6.7px 110.5px,5.1px 102.0px,3.9px 94.2px,2.9px 86.8px,2.2px 80.1px,1.7px 73.8px,1.5px 68.0px,1.6px 62.6px,1.9px 57.6px,2.4px 52.9px,3.1px 48.6px,4.0px 44.6px,5.2px 41.0px,6.5px 37.6px,8.1px 34.6px,9.8px 31.8px,11.7px 29.4px,13.7px 27.2px,15.9px 25.3px,18.2px 23.7px,20.6px 22.3px,23.2px 21.2px,25.8px 20.2px,28.5px 19.4px,31.3px 18.8px,34.2px 18.3px,37.1px 17.9px,40.2px 17.6px,43.2px 17.4px,46.4px 17.2px,49.5px 17.1px,52.7px 17.0px,55.9px 17.0px,59.0px 17.0px,62.2px 17.0px,65.3px 17.0px,68.5px 17.1px,71.8px 17.2px,75.0px 17.3px,78.3px 17.5px,81.6px 17.7px,85.0px 17.9px,88.4px 18.1px,91.8px 18.4px,95.4px 18.7px,98.9px 19.0px,102.6px 19.4px,106.3px 19.7px,110.0px 20.1px,113.8px 20.5px,117.7px 20.9px,121.7px 21.4px,125.7px 21.9px,129.8px 22.4px,134.0px 22.9px,138.3px 23.4px,142.7px 23.9px,147.1px 24.5px,151.7px 25.1px,156.3px 25.7px,161.0px 26.3px,165.9px 27.0px,170.8px 27.6px,175.8px 28.3px,181.0px 29.0px,186.2px 29.7px,191.5px 30.4px,197.0px 31.2px,202.6px 31.9px,208.2px 32.7px,214.0px 33.5px,219.9px 34.3px,226.0px 35.2px,232.1px 36.0px,238.4px 36.9px,244.7px 37.8px,251.2px 38.7px,257.9px 39.6px,264.6px 40.6px,271.4px 41.5px,278.4px 42.5px,285.5px 43.5px,292.6px 44.5px,299.9px 45.6px,307.3px 46.6px,314.8px 47.6px,322.4px 48.7px,330.1px 49.8px,337.9px 50.9px,345.7px 52.0px,353.7px 53.1px,361.7px 54.2px,369.8px 55.3px,377.9px 56.5px,386.1px 57.6px,394.3px 58.8px,402.5px 59.9px,410.6px 61.1px,418.6px 62.2px,426.6px 63.3px,434.4px 64.4px,442.3px 65.5px,450.1px 66.6px,457.9px 67.7px,465.7px 68.8px,473.5px 69.9px,481.1px 71.0px,488.6px 72.0px,495.8px 73.0px,502.9px 74.0px,509.9px 75.0px,516.7px 76.0px,523.3px 76.9px,529.8px 77.8px,536.1px 78.7px,542.3px 79.5px,548.3px 80.4px,554.1px 81.2px,559.7px 82.0px,565.1px 82.8px,570.4px 83.5px,575.4px 84.2px,580.3px 84.9px,585.0px 85.5px,589.6px 86.2px,594.0px 86.8px,598.2px 87.4px,602.3px 88.0px,606.2px 88.5px,610.0px 89.1px,613.7px 89.6px,617.3px 90.1px,620.8px 90.6px,624.2px 91.0px,627.5px 91.5px,630.7px 91.9px,633.8px 92.4px,636.8px 92.8px,639.7px 93.2px,642.5px 93.6px,645.2px 94.0px,647.8px 94.4px,650.4px 94.7px,652.8px 95.1px,655.1px 95.4px,657.3px 95.7px,659.5px 96.0px,661.5px 96.3px,663.3px 96.5px,665.1px 96.8px,666.8px 97.0px,668.3px 97.2px,669.8px 97.4px,671.3px 97.7px,672.7px 97.8px,674.0px 98.0px,675.2px 98.2px,676.4px 98.4px,677.5px 98.5px,678.6px 98.7px,679.6px 98.8px,680.5px 98.9px,681.3px 99.1px,682.1px 99.2px,682.8px 99.3px,683.5px 99.4px,684.1px 99.5px,684.6px 99.5px,685.2px 99.6px,685.8px 99.7px,686.3px 99.8px,686.8px 99.8px,687.3px 99.9px,687.8px 100.0px,688.2px 100.0px,688.6px 100.1px,689.1px 100.2px,689.5px 100.2px,689.9px 100.3px,690.3px 100.3px,690.7px 100.4px,691.1px 100.4px,691.5px 100.5px,691.9px 100.6px,692.3px 100.6px,692.7px 100.7px,693.1px 100.7px,693.4px 100.8px,693.7px 100.8px,694.0px 100.8px,694.2px 100.9px,694.3px 100.9px,694.5px 100.9px,694.6px 100.9px,694.7px 101.0px,694.9px 101.0px,695.0px 101.0px,695.1px 101.0px,695.2px 101.0px,695.2px 101.0px,695.3px 101.0px,695.4px 101.0px,695.4px 101.0px);"></div>
<div style="position:absolute;left:1681px;top:380px;width:700px;height:625px;background:radial-gradient(circle at 220.6px 141.1px,rgba(255,255,255,1) 0px,rgba(255,255,255,0.9) 8px,rgba(255,255,255,0.55) 25px,rgba(255,255,255,0.22) 55px,rgba(255,255,255,0.06) 90px,rgba(255,255,255,0) 125px),conic-gradient(from 0deg at 220.6px 141.1px,#f8f840 0deg,#f8d040 8deg,#f4a040 20deg,#ec6a38 40deg,#e84a30 60deg,#e24028 78deg,#e04048 100deg,#e04090 118deg,#e040d0 132deg,#e640f0 142deg,#b030f4 152deg,#8a2cf4 162deg,#5020f4 175deg,#3a14f4 186deg,#3430f4 202deg,#3a56f4 218deg,#4088f4 238deg,#58b8f4 252deg,#70e8f4 262deg,#70f0c0 275deg,#70e880 290deg,#70e050 320deg,#a0f048 340deg,#d8f440 352deg,#f8f840 360deg);clip-path:polygon(502.8px 83.9px,139.4px 42.4px,195.7px 466.3px);"></div>
<div style="position:absolute;left:2178.9px;top:817.5px;width:196px;height:185.5px;background:#303030;"></div>
<div style="position:absolute;left:2182.9px;top:821.5px;width:188px;height:177.5px;background:radial-gradient(circle at 92px 89px,rgba(255,255,255,1) 0px,rgba(255,255,255,0.85) 8px,rgba(255,255,255,0.5) 30px,rgba(255,255,255,0.18) 70px,rgba(255,255,255,0) 115px),conic-gradient(from 0deg at 92px 89px,#fffcb0 0deg,#fff8a8 6deg,#f8c888 35deg,#f0ac84 55deg,#eea0a0 90deg,#eea0cc 120deg,#eea0f2 141deg,#c8a8f8 165deg,#a8b4f8 195deg,#88c0f8 225deg,#98f4f8 262deg,#a0f8c8 290deg,#a0f8a0 318deg,#d0f8a0 345deg,#fffcb0 360deg);"></div>
<svg style="left:0;top:0" width="2560" height="1100"><rect x="1825.0" y="428.1" width="18" height="18" fill="none" stroke="#f4f4ee" stroke-width="2.2"/><rect x="1897.2" y="438.8" width="18" height="18" fill="none" stroke="#f4f4ee" stroke-width="2.2"/><rect x="2096.3" y="467.0" width="18" height="18" fill="none" stroke="#f4f4ee" stroke-width="2.2"/><rect x="1840.8" y="519.5" width="18" height="18" fill="none" stroke="#f4f4ee" stroke-width="2.2"/><rect x="1971.7" y="607.0" width="18" height="18" fill="none" stroke="#f4f4ee" stroke-width="2.2"/><rect x="1876.3" y="713.0" width="18" height="18" fill="none" stroke="#f4f4ee" stroke-width="2.2"/><rect x="1890.4" y="509.3" width="18" height="18" fill="none" stroke="#000" stroke-width="2.2"/><rect x="2266.2" y="900.6" width="18" height="18" fill="none" stroke="#000" stroke-width="2.2"/></svg>
<div style="position:absolute;left:0px;top:1246px;width:2560px;height:119px;background:linear-gradient(#484848,#2c2c2c);"></div>
<div style="position:absolute;left:0px;top:1246px;width:85px;height:125px;background:linear-gradient(#a6a6a6,#5c5c5c);border-radius:0 8px 0 0;"></div>
<svg style="left:0;top:1246" width="85" height="40"><defs><linearGradient id="cgup1" x1="0" y1="0" x2="0" y2="1"><stop offset="0" stop-color="#7a7a7a"/><stop offset="1" stop-color="#a6a6a6"/></linearGradient></defs><circle cx="41" cy="19" r="14" fill="url(#cgup1)"/><path d="M33,21L50,21L41.5,13Z" fill="#333"/></svg>
<div style="position:absolute;left:8.6px;top:1297.5px;width:67.2px;height:57.5px;background:#fff;border-radius:6px;box-shadow:inset 3px 2px 3px rgba(0,0,0,0.35);"></div>
<div style="position:absolute;left:97px;top:1246px;width:291px;height:125px;background:linear-gradient(#a4a4a4,#5a5a5a);border-radius:8px 8px 0 0;"></div>
<div style="position:absolute;left:107px;top:1256px;width:271px;height:69.6px;background:#000;border-radius:8px;"></div>
<div class="t" style="left:236.65px;top:1339.01px;font-size:18.90px;line-height:18.90px;color:#333333;transform:scaleX(1.1246);">0</div>
<div style="position:absolute;left:392px;top:1246px;width:290px;height:125px;background:#2a2a2a;border-radius:8px 8px 0 0;box-shadow:inset 0 0 0 1.5px #3a3a3a;"></div>
<div style="position:absolute;left:401.6px;top:1256px;width:271.9px;height:69.6px;background:#fff;border-radius:8px;box-shadow:inset 3px 2px 3px rgba(0,0,0,0.3);"></div>
<div class="t" style="left:518.66px;top:1338.91px;font-size:20.78px;line-height:20.78px;color:#f4f4f4;font-weight:bold;transform:scaleX(1.0760);">100</div>
<div style="position:absolute;left:1934.6px;top:1246.4px;width:94px;height:125px;background:linear-gradient(#a8a8a8 0px,#7c7c7c 35px,#8c8c8c 36px,#5e5e5e 119px);border-radius:8px 8px 0 0;"></div>
<div style="position:absolute;left:1934.6px;top:1281.6px;width:94px;height:1.2px;background:#3e3e3e;"></div>
<svg style="left:1934;top:1246" width="95" height="40"><defs><linearGradient id="cgup2" x1="0" y1="0" x2="0" y2="1"><stop offset="0" stop-color="#7c7c7c"/><stop offset="1" stop-color="#a8a8a8"/></linearGradient></defs><circle cx="47.3" cy="18.3" r="13.7" fill="url(#cgup2)"/><path d="M39.5,21L56.5,21L48,12.8Z" fill="#333"/></svg>
<svg style="left:1951.3;top:1293.3" width="61" height="61">
<rect x="0" y="0" width="60.2" height="60.1" rx="8" fill="#1e1e1e"/>
<defs><clipPath id="icl"><rect x="4.9" y="4.7" width="50.9" height="50.5" rx="4"/></clipPath><clipPath id="icb"><rect x="18" y="0" width="24" height="61"/></clipPath></defs>
<g clip-path="url(#icl)">
<rect x="4.9" y="4" width="13.1" height="53" fill="#2a5a22"/>
<rect x="4.9" y="4" width="13.1" height="13" fill="#80f050"/>
<path d="M11,17H18V45H14Z" fill="#7ce858"/><rect x="4.9" y="45" width="13.1" height="12" fill="#3a8a28"/>
<rect x="18" y="4" width="24" height="53" fill="#2a20e0"/><rect x="18" y="30" width="24" height="27" fill="#1a10a8"/>
<g clip-path="url(#icb)"><circle cx="30.6" cy="30.6" r="4.5" fill="none" stroke="#6a5cff" stroke-width="1.6"/><circle cx="30.6" cy="30.6" r="9" fill="none" stroke="#6a5cff" stroke-width="1.6"/><circle cx="30.6" cy="30.6" r="13.5" fill="none" stroke="#6a5cff" stroke-width="1.6"/><circle cx="30.6" cy="30.6" r="18" fill="none" stroke="#6a5cff" stroke-width="1.6"/><circle cx="30.6" cy="30.6" r="22.5" fill="none" stroke="#6a5cff" stroke-width="1.6"/><circle cx="30.6" cy="30.6" r="27" fill="none" stroke="#6a5cff" stroke-width="1.6"/></g>
<rect x="42" y="4" width="13.8" height="53" fill="#2a5a5a"/>
<rect x="42" y="4" width="13.8" height="13" fill="#88f8f8"/>
<path d="M42,17H49.5L49,45H42Z" fill="#80eef0"/><rect x="42" y="45" width="13.8" height="12" fill="#3a9898"/>
<rect x="4.9" y="29.5" width="50.9" height="1.2" fill="#1a1a1a" opacity="0.6"/>
</g></svg>
<div style="position:absolute;left:2030.3px;top:1246.4px;width:438.4px;height:58.2px;background:linear-gradient(#aaaaaa,#6c6c6c);border-radius:8px 0 0 0;"></div>
<div style="position:absolute;left:2119.0px;top:1246.4px;width:1.6px;height:58.2px;background:#363636;"></div>
<div style="position:absolute;left:2206.7px;top:1246.4px;width:1.6px;height:58.2px;background:#363636;"></div>
<div style="position:absolute;left:2293.7px;top:1246.4px;width:1.6px;height:58.2px;background:#363636;"></div>
<div style="position:absolute;left:2381.5px;top:1246.4px;width:1.6px;height:58.2px;background:#363636;"></div>
<div style="position:absolute;left:2030.3px;top:1304.6px;width:529.7px;height:2.2px;background:#363636;"></div>
<svg style="left:2030;top:1246" width="530" height="60"><defs><linearGradient id="cgt0" x1="0" y1="0" x2="0" y2="1"><stop offset="0" stop-color="#7c7c7c"/><stop offset="1" stop-color="#b4b4b4"/></linearGradient></defs><circle cx="45.19999999999982" cy="29" r="18.5" fill="url(#cgt0)"/><defs><linearGradient id="cgt1" x1="0" y1="0" x2="0" y2="1"><stop offset="0" stop-color="#7c7c7c"/><stop offset="1" stop-color="#b4b4b4"/></linearGradient></defs><circle cx="134" cy="29" r="18.5" fill="url(#cgt1)"/><defs><linearGradient id="cgt2" x1="0" y1="0" x2="0" y2="1"><stop offset="0" stop-color="#7c7c7c"/><stop offset="1" stop-color="#b4b4b4"/></linearGradient></defs><circle cx="220.5" cy="29" r="18.5" fill="url(#cgt2)"/><defs><linearGradient id="cgt3" x1="0" y1="0" x2="0" y2="1"><stop offset="0" stop-color="#7c7c7c"/><stop offset="1" stop-color="#b4b4b4"/></linearGradient></defs><circle cx="309" cy="29" r="18.5" fill="url(#cgt3)"/><defs><linearGradient id="cgt4" x1="0" y1="0" x2="0" y2="1"><stop offset="0" stop-color="#7c7c7c"/><stop offset="1" stop-color="#b4b4b4"/></linearGradient></defs><circle cx="395.5" cy="29" r="18.5" fill="url(#cgt4)"/><rect x="37.4" y="22.4" width="15.2" height="14.2" fill="#333"/><path d="M129,22L145,30L129,38.5Z" fill="#333"/><path d="M212,21.5H208.5V37.5H212M229,21.5H232.5V37.5H229" fill="none" stroke="#333" stroke-width="2.6"/><rect x="214" y="28.2" width="2.6" height="2.6" fill="#333"/><rect x="218.9" y="28.2" width="2.6" height="2.6" fill="#333"/><rect x="223.8" y="28.2" width="2.6" height="2.6" fill="#333"/><path d="M296,29C296,23.5 305,23.5 309,29S322,34.5 322,29S313,23.5 309,29S296,34.5 296,29Z" fill="none" stroke="#333" stroke-width="3"/><path d="M386.5,29A9,9 0 0 1 402,22.8M404.5,29A9,9 0 0 1 389,35.2" fill="none" stroke="#333" stroke-width="3.4"/><path d="M403,17L405,25.5L397,24Z" fill="#333"/><path d="M388,41L386,32.5L394,34Z" fill="#333"/></svg>
<div style="position:absolute;left:2469px;top:1246.4px;width:91px;height:58.2px;background:#2e2e2e;"></div>
<div style="position:absolute;left:2473px;top:1249.3px;width:84.3px;height:52.5px;background:linear-gradient(#6c6c6c,#565656);"></div>
<div class="t" style="left:2486.85px;top:1258.57px;font-size:34.88px;line-height:34.88px;color:#f8f8f8;transform:scaleX(0.9728);">123</div>
<div style="position:absolute;left:2030.3px;top:1306.6px;width:529.7px;height:60px;background:linear-gradient(#acacac,#6a6a6a);border-radius:8px 8px 0 0;"></div>
<div style="position:absolute;left:2293.7px;top:1306.6px;width:1.6px;height:60px;background:#363636;"></div>
<svg style="left:2030;top:1306" width="530" height="60"><defs><linearGradient id="cgbk" x1="0" y1="0" x2="0" y2="1"><stop offset="0" stop-color="#7c7c7c"/><stop offset="1" stop-color="#b4b4b4"/></linearGradient></defs><circle cx="59.8" cy="29" r="19" fill="url(#cgbk)"/><defs><linearGradient id="cgnx" x1="0" y1="0" x2="0" y2="1"><stop offset="0" stop-color="#7c7c7c"/><stop offset="1" stop-color="#b4b4b4"/></linearGradient></defs><circle cx="473.7" cy="29" r="19" fill="url(#cgnx)"/><path d="M59,19.5L51.5,29L59,38.5M67,19.5L59.5,29L67,38.5" fill="none" stroke="#333" stroke-width="2.6"/><path d="M468.5,19.5L476,29L468.5,38.5M476.5,19.5L484,29L476.5,38.5" fill="none" stroke="#333" stroke-width="2.6"/></svg>
<div class="t" style="left:2138.86px;top:1314.09px;font-size:43.60px;line-height:43.60px;color:#303030;transform:scaleX(1.0424);-webkit-text-stroke:0.8px #303030;">Back</div>
<div class="t" style="left:2346.48px;top:1314.09px;font-size:43.60px;line-height:43.60px;color:#303030;transform:scaleX(1.1525);-webkit-text-stroke:0.8px #303030;">Next</div>
<div style="position:absolute;left:2548px;top:127px;width:12px;height:1238px;background:linear-gradient(90deg,rgba(0,0,0,0),rgba(0,0,0,0.28));"></div>
<div style="position:absolute;left:0px;top:127px;width:2560px;height:5px;background:linear-gradient(rgba(0,0,0,0.12),rgba(0,0,0,0));"></div>
</body></html>
